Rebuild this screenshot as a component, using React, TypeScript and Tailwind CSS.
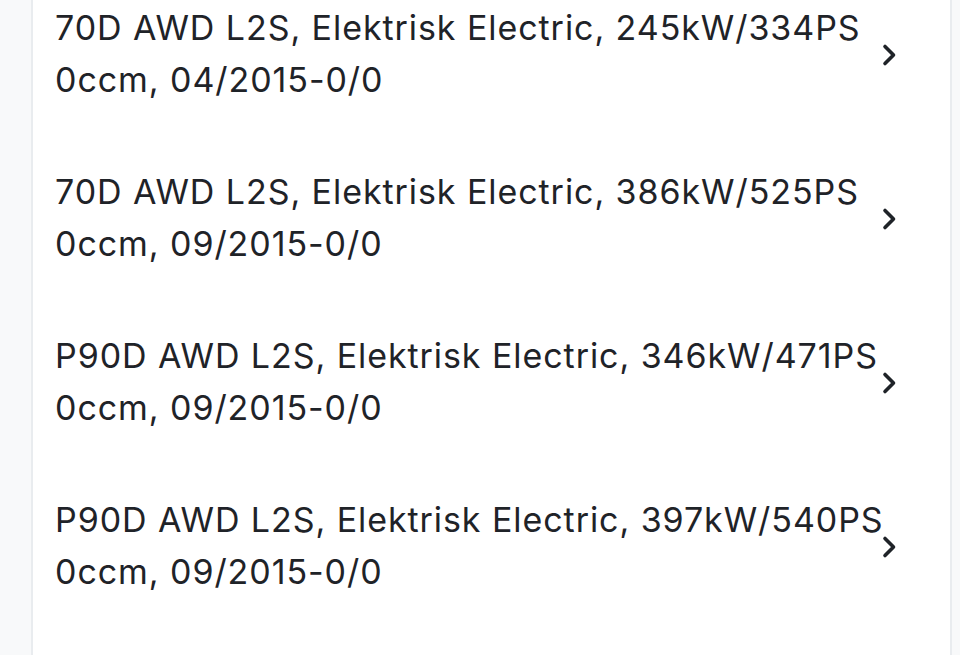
import { ReactNode } from "react";

// ── 데이터 ──────────────────────────────────────────────
const ITEMS = [
  { title: "70D AWD L2S, Elektrisk Electric, 245kW/334PS", sub: "0ccm, 04/2015-0/0" },
  { title: "70D AWD L2S, Elektrisk Electric, 386kW/525PS", sub: "0ccm, 09/2015-0/0" },
  { title: "P90D AWD L2S, Elektrisk Electric, 346kW/471PS", sub: "0ccm, 09/2015-0/0" },
  { title: "P90D AWD L2S, Elektrisk Electric, 397kW/540PS", sub: "0ccm, 09/2015-0/0" },
];

function Chevron() {
  return (
    <svg width="16" height="24" viewBox="0 0 16 24" fill="none" className="shrink-0">
      <path d="M4 3.5l8.5 8.5-8.5 8.5" stroke="#1f2328" strokeWidth="3.6" strokeLinecap="round" strokeLinejoin="round" />
    </svg>
  );
}

function Row({ children }: { children: ReactNode }) {
  return (
    <div className="relative pl-[22px] pr-[52px] py-[30px]">
      {children}
      <div className="absolute left-[848px] top-1/2 -translate-y-[11px]">
        <Chevron />
      </div>
    </div>
  );
}

export default function App() {
  return (
    <div
      className="flex w-[960px] h-[655px] overflow-hidden bg-[#f8f9fa]"
      style={{ fontFamily: "Inter, 'Noto Sans', sans-serif" }}
    >
      <div className="w-[31px] shrink-0" />
      <div className="w-[921px] shrink-0 bg-white border-x-2 border-[#e9ecef]">
        <div className="-mt-[28px]">
          {ITEMS.map((it, i) => (
            <Row key={i}>
              <div className="text-[34px] leading-[52px] text-[#1f2328] whitespace-nowrap tracking-[0.93px]">
                <div>{it.title}</div>
                <div>{it.sub}</div>
              </div>
            </Row>
          ))}
        </div>
      </div>
    </div>
  );
}
